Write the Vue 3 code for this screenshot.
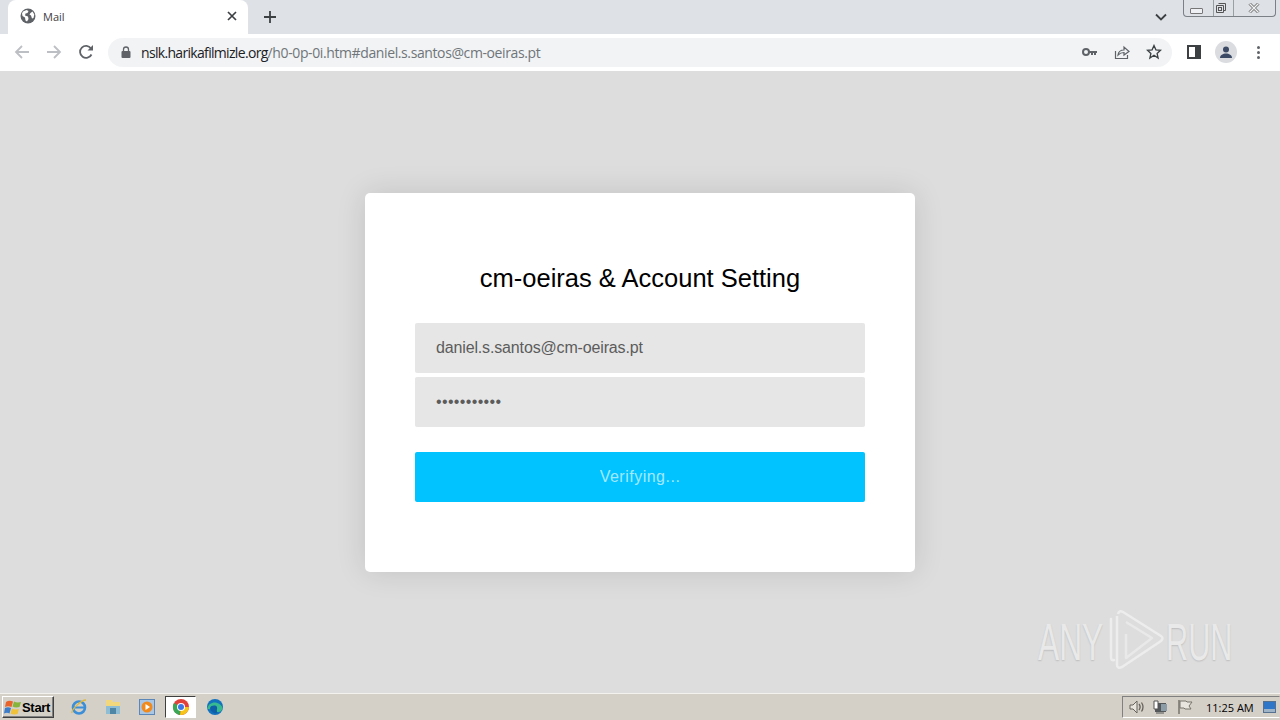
<script setup>
const quickIcons = ['ie', 'folder', 'media', 'chrome', 'edge']
const email = 'daniel.s.santos@cm-oeiras.pt'
const password = 'password123'
</script>

<template>
  <div class="screen">
    <!-- tab strip -->
    <div class="tabstrip">
      <div class="tab">
        <svg class="globe" viewBox="0 0 16 16" width="16" height="16">
          <circle cx="8" cy="8" r="7.5" fill="#5f6368" />
          <path d="M3 3.5l3.5-1.5 2 1-1 2-2 .5-.5 2 3 1 .5 2.5-1.5 2.5-1.5-1-.5-3-2.5-1.5-.5-2.5zM10.5 5l2-1.5 1.8 3-.8 3.5-1.5.5-1-3-1.5-1z" fill="#fff" />
        </svg>
        <span class="tab-title">Mail</span>
        <svg class="tab-close" viewBox="0 0 10 10" width="10" height="10">
          <path d="M1 1l8 8M9 1l-8 8" stroke="#3c4043" stroke-width="1.7" fill="none" />
        </svg>
      </div>
      <svg class="new-tab" viewBox="0 0 12 12" width="12" height="12">
        <path d="M6 0v12M0 6h12" stroke="#3c4043" stroke-width="1.8" fill="none" />
      </svg>
      <svg class="tab-list" viewBox="0 0 12 8" width="12" height="8">
        <path d="M1 1.5l5 5 5-5" stroke="#3c4043" stroke-width="1.8" fill="none" />
      </svg>
      <div class="win-controls">
        <span class="win-btn min"><i></i></span>
        <span class="win-btn restore">
          <svg viewBox="0 0 12 12" width="12" height="12">
            <path d="M3.5 1.5h7v7h-2M1.5 3.5h7v7h-7z" stroke="#555" fill="none" />
            <rect x="3.5" y="5.5" width="3" height="3" stroke="#555" fill="none" />
          </svg>
        </span>
        <span class="win-btn close">
          <svg viewBox="0 0 12 10" width="12" height="10">
            <path d="M1.5 .5l9 9M10.5 .5l-9 9" stroke="#777" stroke-width="3" fill="none" />
            <path d="M1.5 .5l9 9M10.5 .5l-9 9" stroke="#f1f2f4" stroke-width="1.2" fill="none" />
          </svg>
        </span>
      </div>
    </div>

    <!-- toolbar -->
    <div class="toolbar">
      <svg class="nav" viewBox="0 0 16 16" width="16" height="16">
        <path d="M15 8H2M8 2L2 8l6 6" stroke="#bcbfc3" stroke-width="1.8" fill="none" />
      </svg>
      <svg class="nav" viewBox="0 0 16 16" width="16" height="16">
        <path d="M1 8h13M8 2l6 6-6 6" stroke="#bcbfc3" stroke-width="1.8" fill="none" />
      </svg>
      <svg class="nav" viewBox="0 0 16 16" width="16" height="16">
        <path d="M13.5 10.5A6 6 0 1 1 13 4.5" stroke="#5f6368" stroke-width="1.8" fill="none" />
        <path d="M9.5 6.5H15V1z" fill="#5f6368" />
      </svg>
      <div class="omnibox">
        <svg class="lock" viewBox="0 0 10 12" width="10" height="12">
          <path d="M2.5 5V3.5a2.5 2.5 0 0 1 5 0V5" stroke="#5f6368" stroke-width="1.3" fill="none" />
          <rect x="0.5" y="5" width="9" height="7" rx="1" fill="#5f6368" />
        </svg>
        <span class="url"><span class="host">nslk.harikafilmizle.org</span>/h0-0p-0i.htm#daniel.s.santos@cm-oeiras.pt</span>
        <svg class="omni-icon key" viewBox="0 0 16 10" width="16" height="10">
          <circle cx="4" cy="5" r="3" stroke="#5f6368" stroke-width="2" fill="none" />
          <path d="M7 4h8v2h-1v2h-2V6h-1v2H9V6H7z" fill="#5f6368" />
        </svg>
        <svg class="omni-icon share" viewBox="0 0 16 16" width="16" height="16">
          <path d="M1.5 7v7.5h12V11" stroke="#5f6368" stroke-width="1.2" fill="none" />
          <path d="M4 11c.5-3.5 3-5 6-5V3l5 4.5L10 11V8.5C7.5 8.5 5.5 9.5 4 11z" stroke="#5f6368" stroke-width="1.2" fill="none" />
        </svg>
        <svg class="omni-icon star" viewBox="0 0 16 16" width="16" height="16">
          <path d="M8 1.5l1.9 4.3 4.6.5-3.4 3.1 1 4.6L8 11.2l-4.1 2.8 1-4.6L1.5 6.3l4.6-.5z" stroke="#3c4043" stroke-width="1.3" fill="none" />
        </svg>
      </div>
      <svg class="side-panel" viewBox="0 0 14 14" width="14" height="14">
        <rect x="1" y="1" width="12" height="12" stroke="#3c4043" stroke-width="2" fill="#fff" />
        <rect x="8" y="1" width="5" height="12" fill="#3c4043" />
      </svg>
      <span class="avatar">
        <svg viewBox="0 0 14 14" width="14" height="14">
          <circle cx="7" cy="4.5" r="3" fill="#3c4a66" />
          <path d="M1 13c0-3 3-4.5 6-4.5s6 1.5 6 4.5z" fill="#3c4a66" />
        </svg>
      </span>
      <span class="kebab"><i></i><i></i><i></i></span>
    </div>

    <!-- page -->
    <div class="page">
      <form class="card" @submit.prevent>
        <h1 class="title">cm-oeiras &amp; Account Setting</h1>
        <input class="field" type="text" :value="email" readonly />
        <input class="field pass" type="password" :value="password" readonly />
        <button class="submit" type="button">Verifying...</button>
      </form>

      <div class="watermark">
        <span>ANY</span>
        <svg viewBox="0 0 57 60" width="57" height="60">
          <path d="M3 9v38q0 4 3 3" stroke="#ededed" stroke-width="2.5" fill="none" stroke-linecap="round" />
          <path d="M9 6v49q0 4 5 2L53 31q3-3 0-5L15 2q-4-2-5 2" stroke="#ededed" stroke-width="2.5" fill="none" stroke-linejoin="round" />
          <path d="M18 24v24l26-20L18 12" stroke="#e9e9e9" stroke-width="2.5" fill="none" stroke-linejoin="round" />
        </svg>
        <span class="run">RUN</span>
      </div>
    </div>

    <!-- taskbar -->
    <div class="taskbar">
      <div class="start">
        <svg viewBox="0 0 18 16" width="18" height="16">
          <path d="M2 3q3-2 7-.5L7.5 8Q4 6.5 1 8z" fill="#e8622c" />
          <path d="M10 2.5q3 1.5 7 .5l-1.5 5q-4 1-7-.5z" fill="#86b43b" />
          <path d="M1 9q3-1.5 6 0l-1.5 5.5Q3 13 0 14.5z" fill="#3d7cc9" />
          <path d="M8 9.5q3 1.5 7 .5l-1.5 5q-4 1-7-.5z" fill="#f0c23a" />
        </svg>
        <span>Start</span>
      </div>
      <div class="quick">
        <span v-for="icon in quickIcons" :key="icon" class="quick-item" :class="{ active: icon === 'chrome' }">
          <svg v-if="icon === 'ie'" viewBox="0 0 18 18" width="18" height="18">
            <circle cx="9" cy="9.5" r="6" stroke="#3b8ed8" stroke-width="2.6" fill="none" />
            <path d="M4 9.5h10" stroke="#3b8ed8" stroke-width="2" />
            <path d="M2 15C1 12 11 2 16 2" stroke="#e0b83c" stroke-width="1.3" fill="none" />
          </svg>
          <svg v-else-if="icon === 'folder'" viewBox="0 0 18 18" width="18" height="18">
            <path d="M2 2h6l1 2h7v12H2z" fill="#f2d77c" />
            <path d="M2 8h14v8H2z" fill="#8fbdd3" />
            <rect x="6" y="10" width="6" height="6" fill="#4f86a6" />
          </svg>
          <svg v-else-if="icon === 'media'" viewBox="0 0 18 18" width="18" height="18">
            <rect x="1.5" y="1.5" width="15" height="15" fill="#a8c6e6" stroke="#5a86b8" />
            <circle cx="9" cy="9" r="5.5" fill="#f08a1d" />
            <path d="M7.5 6v6l4.5-3z" fill="#fff" />
          </svg>
          <svg v-else-if="icon === 'chrome'" viewBox="0 0 18 18" width="18" height="18">
            <circle cx="9" cy="9" r="8" fill="#e0413a" />
            <path d="M9 9L2 5A8 8 0 0 0 8 17z" fill="#3aa757" />
            <path d="M9 9h8A8 8 0 0 1 8 17z" fill="#f5c518" />
            <circle cx="9" cy="9" r="4" fill="#fff" />
            <circle cx="9" cy="9" r="3" fill="#3b78e7" />
          </svg>
          <svg v-else viewBox="0 0 18 18" width="18" height="18">
            <circle cx="9" cy="9" r="8" fill="#1272bd" />
            <path d="M1.5 11c0-5 5-7 8-6.5s7 3 7 6c-1 3-3 3.5-5 3.5s-2-1-1.5-2.5c-3-1-5 0-8.5-.5z" fill="#3cc28a" opacity="0.9" />
            <path d="M4 10c1-3 6-3 7-1 .5 2-1 4 .5 6-3 1-7-1-7.5-5z" fill="#0f5fa8" />
          </svg>
        </span>
      </div>
      <div class="tray">
        <svg viewBox="0 0 18 16" width="18" height="16">
          <path d="M2 6h3l4-4v12l-4-4H2z" fill="#e8e5de" stroke="#66635c" />
          <path d="M11 5c1.5 2 1.5 4 0 6M13.5 3.5c2 3 2 6 0 9" stroke="#66635c" stroke-width="1.3" fill="none" />
        </svg>
        <svg viewBox="0 0 18 16" width="18" height="16">
          <rect x="3" y="4" width="11" height="9" fill="#55585a" />
          <rect x="9" y="5" width="6" height="7" fill="#8d9da8" />
          <path d="M2 2v8h4V2z" fill="#fff" stroke="#555" />
          <path d="M4 14h8" stroke="#555" />
        </svg>
        <svg viewBox="0 0 18 16" width="18" height="16">
          <path d="M3 1v14" stroke="#77746c" stroke-width="1.5" />
          <path d="M4 2h6l1 1h5l-3 4 2 3H9L8 9H4z" fill="#e8e5de" stroke="#77746c" />
        </svg>
        <span class="clock">11:25 AM</span>
        <svg class="desktop" viewBox="0 0 13 12" width="13" height="12">
          <rect x="0.5" y="0.5" width="12" height="11" fill="#2e76c7" stroke="#55718f" />
          <rect x="1" y="8" width="11" height="3" fill="#9fb4c7" />
        </svg>
      </div>
    </div>
  </div>
</template>

<style scoped>
.screen {
  width: 1280px;
  height: 720px;
  display: flex;
  flex-direction: column;
  position: relative;
  overflow: hidden;
  font-family: "Liberation Sans", Arial, sans-serif;
}

.tabstrip {
  height: 34px;
  flex: none;
  background: #dee1e6;
  display: flex;
  align-items: flex-start;
  padding-left: 8px;
}

.tab {
  width: 240px;
  height: 34px;
  box-sizing: border-box;
  background: #fff;
  border-radius: 8px 8px 0 0;
  display: flex;
  align-items: center;
  padding: 0 11px 2px 12px;
}

.tab-title {
  margin-left: 7px;
  font-family: "Open Sans", sans-serif;
  font-size: 11px;
  color: #3c4043;
  flex: 1;
}

.new-tab {
  margin: 11px 0 0 16px;
}

.tab-list {
  margin: 13px 0 0 auto;
}

.win-controls {
  display: flex;
  height: 16px;
  margin: 0 4px 0 16px;
  border: 1px solid #7b7f86;
  border-top: none;
  border-radius: 0 0 4px 4px;
}

.win-btn {
  display: flex;
  align-items: center;
  justify-content: center;
  border-right: 1px solid #9a9ea5;
}

.win-btn.min {
  width: 29px;
}

.win-btn.min i {
  width: 11px;
  height: 4px;
  margin-top: 5px;
  margin-right: 5px;
  border: 1px solid #777;
  border-radius: 1px;
  background: #eef0f3;
}

.win-btn.restore {
  width: 20px;
  padding-right: 5px;
  box-sizing: border-box;
}

.win-btn.close {
  width: 41px;
  padding-right: 2px;
  box-sizing: border-box;
  border-right: none;
}

.toolbar {
  height: 37px;
  flex: none;
  box-sizing: border-box;
  background: #fff;
  display: flex;
  align-items: center;
  padding: 0 0 1px 14px;
}

.nav {
  margin-right: 16px;
}

.nav:nth-child(3) {
  margin-right: 14px;
}

.omnibox {
  width: 1064px;
  height: 29px;
  box-sizing: border-box;
  flex: none;
  background: #f1f3f4;
  border-radius: 15px;
  display: flex;
  align-items: center;
  padding: 0 10px 0 13px;
}

.lock {
  flex: none;
}

.url {
  margin-left: 10px;
  flex: 1;
  font-family: "Open Sans", sans-serif;
  font-size: 14px;
  letter-spacing: -0.39px;
  color: #70757a;
  white-space: nowrap;
}

.host {
  color: #202124;
  letter-spacing: -0.68px;
}

.omni-icon {
  flex: none;
  margin-left: 16px;
}

.side-panel {
  flex: none;
  margin-left: 15px;
}

.avatar {
  flex: none;
  width: 22px;
  height: 22px;
  margin-left: 14px;
  border-radius: 50%;
  background: #dadce0;
  display: flex;
  align-items: center;
  justify-content: center;
}

.kebab {
  flex: none;
  margin-left: 20px;
  display: flex;
  flex-direction: column;
  gap: 2px;
}

.kebab i {
  width: 3px;
  height: 3px;
  border-radius: 50%;
  background: #5f6368;
}

.page {
  flex: 1;
  position: relative;
  background: #ddd;
  display: flex;
  align-items: center;
  justify-content: center;
}

.card {
  width: 550px;
  height: 379px;
  box-sizing: border-box;
  background: #fff;
  border-radius: 5px;
  padding: 70px 50px 0;
  box-shadow: 0 0 30px rgba(0, 0, 0, 0.12);
  display: flex;
  flex-direction: column;
}

.title {
  margin: 0 0 30px;
  height: 30px;
  line-height: 30px;
  font-size: 25.5px;
  font-weight: 400;
  color: #000;
  text-align: center;
}

.field {
  width: 100%;
  height: 50px;
  box-sizing: border-box;
  border: none;
  outline: none;
  background: #e6e6e6;
  border-radius: 2px;
  padding: 0 21px;
  margin: 0 0 4px;
  font-family: "Liberation Sans", Arial, sans-serif;
  font-size: 16px;
  letter-spacing: -0.15px;
  color: #5c5c5c;
}

.field.pass {
  margin-bottom: 25px;
  letter-spacing: 0.35px;
}

.submit {
  width: 100%;
  height: 50px;
  border: none;
  border-radius: 2px;
  background: #00c3ff;
  color: rgba(255, 255, 255, 0.65);
  font-family: "Liberation Sans", Arial, sans-serif;
  font-size: 16px;
  letter-spacing: 0.5px;
}

.watermark {
  position: absolute;
  left: 1038px;
  top: 539px;
  height: 60px;
  display: flex;
  align-items: center;
  gap: 4px;
  color: #e9e9e9;
  font-family: "Liberation Sans", Arial, sans-serif;
  font-size: 52px;
  line-height: 1;
  text-shadow: 0 1px 2px rgba(0, 0, 0, 0.15);
}

.watermark span {
  display: inline-block;
  width: 66px;
  margin-top: 3px;
  transform: scaleX(0.61);
  transform-origin: left center;
}

.watermark .run {
  margin-left: -3px;
  transform: scaleX(0.59);
}

.taskbar {
  height: 27px;
  flex: none;
  box-sizing: border-box;
  background: #d4d0c8;
  border-top: 1px solid #f4f2ee;
  display: flex;
  align-items: center;
  padding-left: 2px;
}

.start {
  width: 52px;
  height: 22px;
  box-sizing: border-box;
  border: 1px solid;
  border-color: #fff #404040 #404040 #fff;
  box-shadow: inset -1px -1px 0 #808080;
  display: flex;
  align-items: center;
  font-size: 13px;
  font-weight: 700;
  letter-spacing: -0.3px;
  color: #000;
  padding-left: 1px;
}

.quick {
  margin-left: 9px;
  display: flex;
  align-items: center;
  gap: 3px;
}

.quick-item {
  width: 31px;
  height: 22px;
  box-sizing: border-box;
  display: flex;
  align-items: center;
  justify-content: center;
}

.quick-item.active {
  background: #fff;
  border: 1px solid;
  border-color: #404040 #fff #fff #404040;
}

.tray {
  margin-left: auto;
  width: 158px;
  height: 22px;
  box-sizing: border-box;
  border: 1px solid;
  border-color: #808080 #d4d0c8 #fff #808080;
  display: flex;
  align-items: center;
  gap: 6px;
  padding-left: 5px;
}

.clock {
  margin-left: 6px;
  width: 50px;
  font-family: "Open Sans", sans-serif;
  font-size: 11px;
  color: #000;
  white-space: nowrap;
}

.desktop {
  margin-left: 1px;
}
</style>

<style>
html,
body {
  margin: 0;
  background: #ddd;
}
</style>
